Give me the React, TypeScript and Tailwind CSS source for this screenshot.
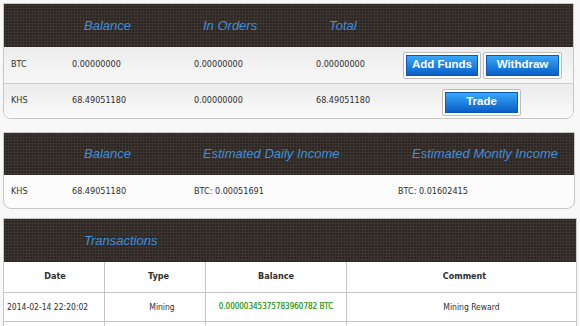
import React from "react";

const dark =
  "bg-[#2d2724] bg-[image:radial-gradient(circle,#403935_0.9px,transparent_1.2px)] bg-[length:3px_3px]";
const hText = "text-[13px] italic text-[#3f8fdc]";

function Btn({ label, w }: { label: string; w: string }) {
  return (
    <div className={`border border-[#bcbcbc] bg-white p-[2px] rounded-[2px] ${w}`}>
      <div className="h-[21px] border border-[#0b58b8] bg-gradient-to-b from-[#38a8fa] to-[#0a5ec6] flex items-center justify-center text-white font-bold text-[11.5px] leading-none" style={{ fontFamily: '"Liberation Sans", Arial, sans-serif' }}>
        {label}
      </div>
    </div>
  );
}

export default function App() {
  return (
    <div
      className="w-[580px] h-[326px] overflow-hidden bg-[#f8f8f8] pt-[3px] pl-[3px] text-[#2e2e2e]"
      style={{ fontFamily: '"DejaVu Sans Condensed", "DejaVu Sans", "Liberation Sans", sans-serif' }}
    >
      {/* Panel 1 */}
      <div className="w-[571px] border border-[#c6c6c6] rounded-b-[8px] bg-white overflow-hidden">
        <div className={`h-[43px] grid grid-cols-[68px_122px_122px_1fr] items-center ${dark}`} style={{ fontFamily: '"Liberation Sans", Arial, sans-serif' }}>
          <span />
          <span className={`${hText} pl-[12px]`}>Balance</span>
          <span className={`${hText} pl-[9px]`}>In Orders</span>
          <span className={`${hText} pl-[13px]`}>Total</span>
        </div>
        <div className="h-[37px] grid grid-cols-[68px_122px_122px_83px_1fr] items-center text-[9px] border-b border-[#cdcdcd] bg-gradient-to-b from-[#ececec] to-[#f8f8f8]">
          <span className="pl-[7px]">BTC</span>
          <span>0.00000000</span>
          <span>0.00000000</span>
          <span>0.00000000</span>
          <div className="flex gap-[2px] pl-[4px]">
            <Btn label="Add Funds" w="w-[78px]" />
            <Btn label="Withdraw" w="w-[79px]" />
          </div>
        </div>
        <div className="h-[34px] grid grid-cols-[68px_122px_122px_83px_1fr] items-center text-[9px] bg-gradient-to-b from-[#ececec] to-[#fafafa]">
          <span className="pl-[7px]">KHS</span>
          <span>68.49051180</span>
          <span>0.00000000</span>
          <span>68.49051180</span>
          <div className="flex pl-[43px] pt-[2px]">
            <Btn label="Trade" w="w-[79px]" />
          </div>
        </div>
      </div>

      {/* Panel 2 */}
      <div className="mt-[13px] w-[572px] border border-[#c6c6c6] rounded-b-[8px] bg-[#fcfcfc] overflow-hidden">
        <div className={`h-[42px] grid grid-cols-[68px_122px_204px_1fr] items-center ${dark}`} style={{ fontFamily: '"Liberation Sans", Arial, sans-serif' }}>
          <span />
          <span className={`${hText} pl-[12px]`}>Balance</span>
          <span className={`${hText} pl-[9px]`}>Estimated Daily Income</span>
          <span className={`${hText} pl-[14px] whitespace-nowrap`}>Estimated Montly Income</span>
        </div>
        <div className="h-[33px] grid grid-cols-[68px_122px_204px_1fr] items-center text-[9px]">
          <span className="pl-[7px]">KHS</span>
          <span>68.49051180</span>
          <span>BTC: 0.00051691</span>
          <span>BTC: 0.01602415</span>
        </div>
      </div>

      {/* Panel 3 */}
      <div className="mt-[9px] w-[574px] border border-[#c6c6c6] bg-white overflow-hidden">
        <div className={`h-[43px] flex items-center ${dark}`} style={{ fontFamily: '"Liberation Sans", Arial, sans-serif' }}>
          <span className={`${hText} pl-[80px]`}>Transactions</span>
        </div>
        <div className="grid grid-cols-[101px_101px_141px_1fr] h-[31px] items-stretch text-[9px] font-bold border-b border-[#c4c4c4]">
          <div className="border-r border-[#c4c4c4] flex items-center justify-center pl-[2px]">Date</div>
          <div className="border-r border-[#c4c4c4] flex items-center justify-center pl-[7px]">Type</div>
          <div className="border-r border-[#c4c4c4] flex items-center justify-center">Balance</div>
          <div className="flex items-center justify-center pl-[6px]">Comment</div>
        </div>
        <div className="grid grid-cols-[101px_101px_141px_1fr] h-[29px] items-stretch text-[8.5px] border-b border-[#c4c4c4]">
          <div className="border-r border-[#c4c4c4] flex items-center pl-[3px] whitespace-nowrap">2014-02-14 22:20:02</div>
          <div className="border-r border-[#c4c4c4] flex items-center justify-center pl-[14px]">Mining</div>
          <div className="border-r border-[#c4c4c4] flex items-center justify-center text-[8px] text-[#44a030] [text-shadow:0_0_0.4px_#44a030] whitespace-nowrap">0.00000345375783960782 BTC</div>
          <div className="flex items-center justify-center pl-[20px]">Mining Reward</div>
        </div>
        <div className="grid grid-cols-[101px_101px_141px_1fr] h-[29px]">
          <div className="border-r border-[#c4c4c4]" />
          <div className="border-r border-[#c4c4c4]" />
          <div className="border-r border-[#c4c4c4]" />
          <div />
        </div>
      </div>
    </div>
  );
}
